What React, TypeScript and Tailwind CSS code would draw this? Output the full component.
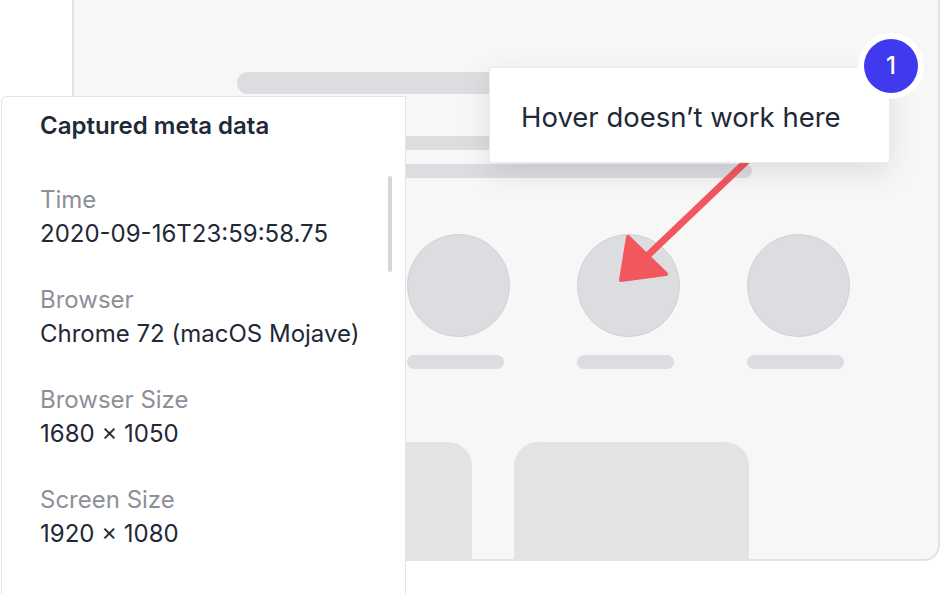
import React from 'react';

const meta = [
  { label: 'Time', value: '2020-09-16T23:59:58.75' },
  { label: 'Browser', value: 'Chrome 72 (macOS Mojave)' },
  { label: 'Browser Size', value: '1680 × 1050' },
  { label: 'Screen Size', value: '1920 × 1080' },
];

const Skeleton = () => (
  <div className="absolute left-[72px] top-[-40px] w-[868px] h-[601px] bg-[#f7f7f7] border-2 border-t-0 border-[#e3e3e3] rounded-br-[16px] overflow-hidden">
    <div className="flex flex-col pl-[163px] pt-[112px]">
      <div className="h-[22px] w-[400px] rounded-full bg-[#dcdde0]" />
      <div className="mt-[42px] h-[14px] w-[460px] rounded-full bg-[#dcdde0]" />
      <div className="mt-[14px] h-[14px] w-[515px] rounded-full bg-[#dcdde0]" />
      <div className="mt-[56px] flex gap-[67px]">
        {[0, 1, 2, 3].map((i) => (
          <div key={i} className="flex flex-col gap-[18px]">
            <div className="w-[103px] h-[103px] rounded-full bg-[#dcdde0] border border-[#d0d1d5]" />
            <div className="w-[97px] h-[14px] rounded-full bg-[#dcdde0]" />
          </div>
        ))}
      </div>
      <div className="mt-[73px] flex gap-[42px]">
        {[0, 1].map((i) => (
          <div key={i} className="w-[235px] h-[200px] rounded-[24px] bg-[#e3e3e5]" />
        ))}
      </div>
    </div>
  </div>
);

const Arrow = () => (
  <svg className="absolute left-0 top-0" width="952" height="594" viewBox="0 0 952 594">
    <line x1="752" y1="156" x2="645" y2="258" stroke="#f2575e" strokeWidth="7" />
    <polygon points="628,237 621,280 666,274" fill="#f2575e" stroke="#f2575e" strokeWidth="4" strokeLinejoin="round" />
  </svg>
);

const MetaPanel = () => (
  <div className="absolute left-[1px] top-[96px] w-[405px] h-[520px] bg-white border border-[#e4e4e4] rounded-tl-[6px] pl-[38px] pt-[14px]">
    <h2 className="text-[24px] leading-[30px] font-semibold text-[#1f2937]">Captured meta data</h2>
    <div className="mt-[42px] flex flex-col gap-[32px]">
      {meta.map((m) => (
        <div key={m.label} className="text-[24px] leading-[34px]">
          <div className="text-[#8d9099]">{m.label}</div>
          <div className="text-[#1f2937]">{m.value}</div>
        </div>
      ))}
    </div>
    <div className="absolute left-[386px] top-[79px] w-[4px] h-[96px] rounded-full bg-[#d6d6d9]" />
  </div>
);

const Tooltip = () => (
  <div className="absolute left-[489px] top-[67px]">
    <div className="w-[401px] h-[96px] bg-white border border-[#ebebeb] rounded-[2px] shadow-[0_10px_30px_rgba(0,0,0,0.10)] flex items-center pl-[31px] pt-[6px]">
      <span className="text-[27.5px] text-[#1f2937]">Hover doesn’t work here</span>
    </div>
    <div className="absolute left-[369px] top-[-34px] w-[66px] h-[66px] rounded-full bg-white flex items-center justify-center">
      <div className="w-[54px] h-[54px] rounded-full bg-[#4139ee] flex items-center justify-center text-white text-[24px] font-medium">
        1
      </div>
    </div>
  </div>
);

export default function App() {
  return (
    <div className="relative w-[952px] h-[594px] overflow-hidden bg-white font-['Inter',sans-serif]">
      <Skeleton />
      <Arrow />
      <MetaPanel />
      <Tooltip />
    </div>
  );
}
